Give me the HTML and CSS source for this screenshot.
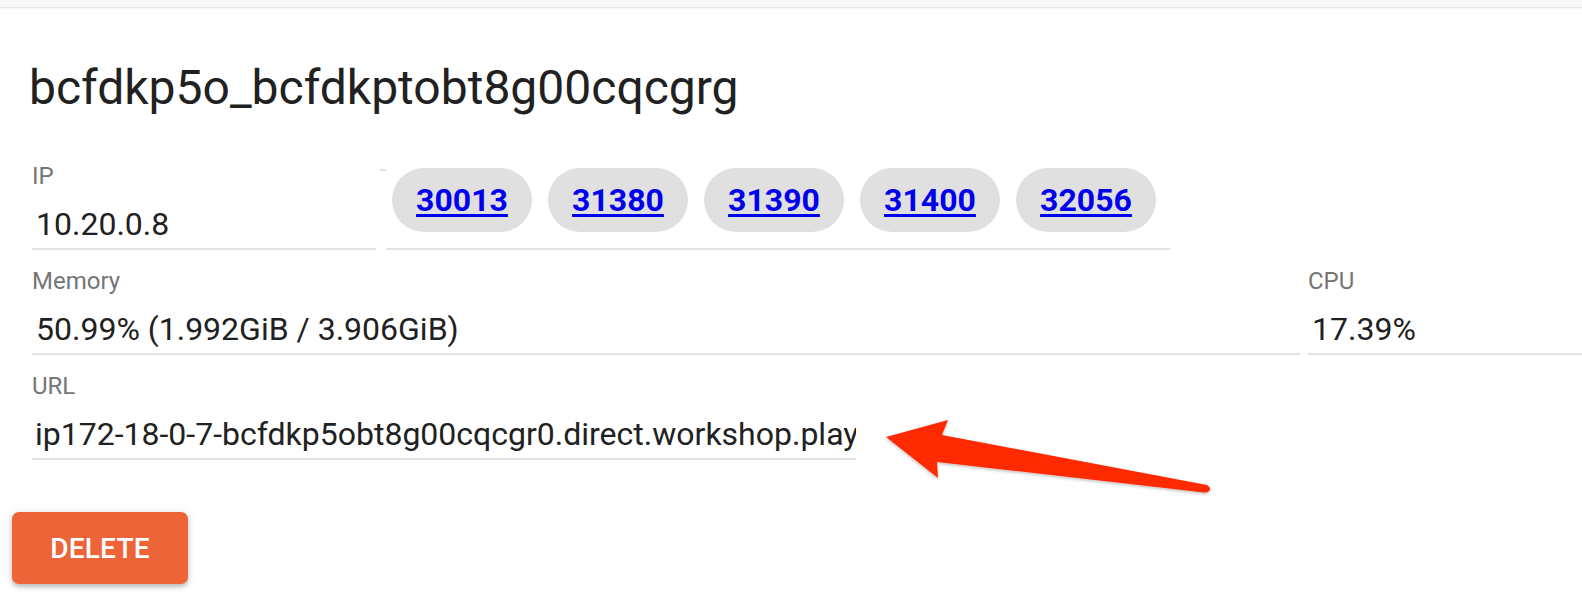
FILE: index.html
```html
<!DOCTYPE html>
<html lang="en">
<head>
<meta charset="utf-8">
<title>Instance</title>
<link rel="stylesheet" href="styles.css">
</head>
<body>
<div class="topbar"></div>
<main class="content">
  <h1 class="title">bcfdkp5o_bcfdkptobt8g00cqcgrg</h1>

  <div class="row">
    <div class="field field-ip">
      <div class="label">IP</div>
      <div class="value">10.20.0.8</div>
    </div>
    <div class="ports">
      <span class="tick"></span>
      <div class="chips">
        <span class="chip"><a href="#">30013</a></span>
        <span class="chip"><a href="#">31380</a></span>
        <span class="chip"><a href="#">31390</a></span>
        <span class="chip"><a href="#">31400</a></span>
        <span class="chip"><a href="#">32056</a></span>
      </div>
    </div>
  </div>

  <div class="row">
    <div class="field field-mem">
      <div class="label">Memory</div>
      <div class="value">50.99% (1.992GiB / 3.906GiB)</div>
    </div>
    <div class="field field-cpu">
      <div class="label">CPU</div>
      <div class="value">17.39%</div>
    </div>
  </div>

  <div class="row">
    <div class="field field-url">
      <div class="label">URL</div>
      <div class="value value-url">ip172-18-0-7-bcfdkp5obt8g00cqcgr0.direct.workshop.play-with-docker.com</div>
    </div>
  </div>

  <button class="delete" type="button">DELETE</button>
</main>

<svg class="arrow" width="1582" height="594" viewBox="0 0 1582 594" aria-hidden="true">
  <defs>
    <filter id="sh" x="-10%" y="-30%" width="120%" height="160%">
      <feDropShadow dx="0" dy="1.5" stdDeviation="1.5" flood-color="#000" flood-opacity="0.25"/>
    </filter>
  </defs>
  <path filter="url(#sh)" fill="#ff2a00"
        d="M886 437 L948 420 L942 435 L1207 485 Q1212 488 1209 491 Q1207 493 1204 492.5 L937 462 L938 478 Z"/>
</svg>
</body>
</html>
```

FILE: styles.css
```css
html, body {
  margin: 0;
  padding: 0;
  background: #ffffff;
}

body {
  width: 1582px;
  height: 594px;
  overflow: hidden;
  position: relative;
  font-family: Roboto, "Liberation Sans", Arial, sans-serif;
  color: rgba(0, 0, 0, 0.87);
}

.topbar {
  height: 7px;
  background: #f8f8f8;
  border-bottom: 1px solid #e9e9e9;
  box-shadow: 0 1px 2px rgba(0, 0, 0, 0.04);
}

.content {
  display: flex;
  flex-direction: column;
  align-items: flex-start;
}

.title {
  margin: 52px 0 0 29px;
  font-size: 48px;
  line-height: 56px;
  font-weight: 400;
  color: #212121;
  letter-spacing: 0;
}

.row {
  display: flex;
  align-items: stretch;
  margin-left: 32px;
  margin-top: 17px;
}

.title + .row {
  margin-top: 46px;
}

.field {
  display: flex;
  flex-direction: column;
  border-bottom: 2px solid #e2e2e2;
  overflow: hidden;
}

.label {
  font-size: 24px;
  line-height: 28px;
  color: #757575;
}

.value {
  margin-top: 15px;
  padding: 0 0 5px 4px;
  font-size: 32px;
  line-height: 38px;
  color: #212121;
  white-space: nowrap;
  overflow: hidden;
}

.value-url {
  padding-left: 3px;
}

.field-ip { width: 344px; }

.ports {
  position: relative;
  width: 790px;
  margin-left: 4px;
  height: 88px;
}

.ports::after {
  content: "";
  position: absolute;
  left: 6px;
  right: 0;
  bottom: 0;
  height: 2px;
  background: #e2e2e2;
}

.tick {
  position: absolute;
  left: 0;
  top: 7px;
  width: 6px;
  height: 2px;
  background: #e2e2e2;
}

.chips {
  display: flex;
  gap: 16px;
  padding: 6px 0 0 12px;
}

.chip {
  display: flex;
  align-items: center;
  justify-content: center;
  width: 140px;
  height: 64px;
  border-radius: 32px;
  background: #e0e0e0;
}

.chip a {
  font-size: 32px;
  font-weight: 700;
  color: #0000ee;
  text-decoration: underline;
  text-decoration-thickness: 3px;
  text-underline-offset: 3px;
  line-height: 38px;
}

.field-mem { width: 1268px; }

.field-cpu {
  width: 292px;
  margin-left: 8px;
}

.field-url { width: 824px; }

.delete {
  margin: 52px 0 0 12px;
  width: 176px;
  height: 72px;
  border: none;
  border-radius: 7px;
  background: #ec6438;
  color: #ffffff;
  font-family: Roboto, "Liberation Sans", Arial, sans-serif;
  font-size: 28px;
  font-weight: 500;
  letter-spacing: 0.2px;
  box-shadow: 0 3px 4px rgba(0, 0, 0, 0.2), 0 1px 10px rgba(0, 0, 0, 0.12);
  cursor: pointer;
}

.arrow {
  position: absolute;
  left: 0;
  top: 0;
  pointer-events: none;
}
```
